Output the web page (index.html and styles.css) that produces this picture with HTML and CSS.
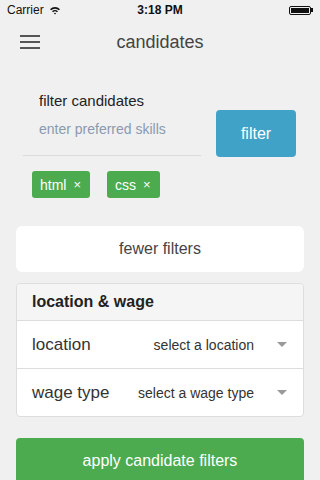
FILE: index.html
```html
<!DOCTYPE html>
<html lang="en">
<head>
    <meta charset="UTF-8">
    <meta name="viewport" content="width=device-width, initial-scale=1.0">
    <title>candidates</title>
    <link rel="stylesheet" href="styles.css">
</head>
<body>
    <div class="status">
        <div class="status-left">
            Carrier
            <svg class="wifi" width="12" height="9" viewBox="0 0 11 9">
                <path d="M0.5 3.2 A7 7 0 0 1 10.5 3.2 L9.4 4.3 A5.4 5.4 0 0 0 1.6 4.3 Z" fill="#111"/>
                <path d="M2.5 5.2 A4.2 4.2 0 0 1 8.5 5.2 L7.4 6.3 A2.6 2.6 0 0 0 3.6 6.3 Z" fill="#111"/>
                <path d="M4.4 7.2 A1.6 1.6 0 0 1 6.6 7.2 L5.5 8.4 Z" fill="#111"/>
            </svg>
        </div>
        <div class="status-time">3:18 PM</div>
        <div class="status-right">
            <div class="battery"><div class="battery-fill"></div></div>
            <div class="battery-nub"></div>
        </div>
    </div>

    <div class="navbar">
        <div class="menu"><span></span><span></span><span></span></div>
        <div class="title">candidates</div>
    </div>

    <div class="filter-row">
        <div class="filter-field">
            <div class="filter-label">filter candidates</div>
            <div class="filter-input">enter preferred skills</div>
        </div>
        <div class="btn-filter">filter</div>
    </div>

    <div class="tags">
        <div class="tag">html <span class="tag-x">&times;</span></div>
        <div class="tag">css <span class="tag-x">&times;</span></div>
    </div>

    <div class="toggle">fewer filters</div>

    <div class="panel">
        <div class="panel-head">location &amp; wage</div>
        <div class="panel-row">
            <div class="row-label">location</div>
            <div class="row-select">select a location</div>
            <div class="caret"></div>
        </div>
        <div class="panel-row">
            <div class="row-label">wage type</div>
            <div class="row-select">select a wage type</div>
            <div class="caret"></div>
        </div>
    </div>

    <div class="apply">apply candidate filters</div>
</body>
</html>
```

FILE: styles.css
```css
body {
    margin: 0;
    background-color: #f0f0f0;
    font-family: "Liberation Sans", Arial, sans-serif;
    color: #333;
    overflow: hidden;
}
.status {
    height: 20px;
    display: flex;
    align-items: center;
    justify-content: space-between;
    padding: 0 7px;
    font-size: 12px;
    color: #111;
}
.status-left {
    width: 100px;
    display: flex;
    align-items: center;
    gap: 5px;
}
.status-time {
    font-weight: bold;
}
.status-right {
    width: 100px;
    display: flex;
    justify-content: flex-end;
    align-items: center;
}
.battery {
    width: 22px;
    height: 9px;
    border: 1px solid #111;
    border-radius: 2px;
    padding: 1px;
    box-sizing: border-box;
}
.battery-fill {
    height: 100%;
    background-color: #111;
}
.battery-nub {
    width: 2px;
    height: 4px;
    background-color: #111;
}
.navbar {
    height: 44px;
    display: flex;
    align-items: center;
    justify-content: center;
    position: relative;
}
.menu {
    position: absolute;
    left: 20px;
    top: 15px;
    display: flex;
    flex-direction: column;
    gap: 4px;
}
.menu span {
    width: 20px;
    height: 2px;
    background-color: #555;
}
.title {
    font-size: 18px;
    color: #444;
}
.filter-row {
    display: flex;
    align-items: flex-end;
    padding: 28px 0 0 23px;
    gap: 15px;
}
.filter-field {
    width: 178px;
    border-bottom: 1px solid #dcdcdc;
    padding: 0 0 17px 16px;
    box-sizing: border-box;
}
.filter-label {
    font-size: 15px;
    line-height: 18px;
    color: #222;
}
.filter-input {
    margin-top: 10px;
    font-size: 14px;
    line-height: 18px;
    color: #8a9aae;
}
.btn-filter {
    width: 80px;
    height: 47px;
    margin-bottom: -1px;
    border-radius: 4px;
    background-color: #41a2c8;
    color: #fff;
    font-size: 16px;
    display: flex;
    align-items: center;
    justify-content: center;
}
.tags {
    display: flex;
    gap: 17px;
    padding: 15px 0 0 32px;
}
.tag {
    height: 27px;
    padding: 0 9px 0 8px;
    border-radius: 3px;
    background-color: #4cab4f;
    color: #fff;
    font-size: 14px;
    display: flex;
    align-items: center;
}
.tag-x {
    margin-left: 7px;
    font-size: 13px;
}
.toggle {
    margin: 28px 16px 0;
    height: 46px;
    border-radius: 6px;
    background-color: #fff;
    display: flex;
    align-items: center;
    justify-content: center;
    font-size: 16px;
    color: #444;
}
.panel {
    margin: 11px 16px 0;
    border: 1px solid #ddd;
    border-radius: 4px;
    background-color: #fff;
}
.panel-head {
    height: 36px;
    padding-left: 15px;
    display: flex;
    align-items: center;
    background-color: #f5f5f5;
    border-bottom: 1px solid #ddd;
    border-radius: 4px 4px 0 0;
    font-size: 16px;
    font-weight: bold;
    color: #222;
}
.panel-row {
    height: 47px;
    display: flex;
    align-items: center;
    padding: 0 16px 0 15px;
}
.panel-row + .panel-row {
    border-top: 1px solid #ddd;
}
.row-label {
    flex: 1;
    font-size: 17px;
    color: #333;
}
.row-select {
    font-size: 14px;
    color: #333;
}
.caret {
    margin-left: 23px;
    width: 0;
    height: 0;
    border-left: 5px solid transparent;
    border-right: 5px solid transparent;
    border-top: 5px solid #999;
}
.apply {
    margin: 21px 16px 0;
    height: 46px;
    border-radius: 4px;
    background-color: #4cab4f;
    color: #fff;
    font-size: 16px;
    display: flex;
    align-items: center;
    justify-content: center;
}
```
